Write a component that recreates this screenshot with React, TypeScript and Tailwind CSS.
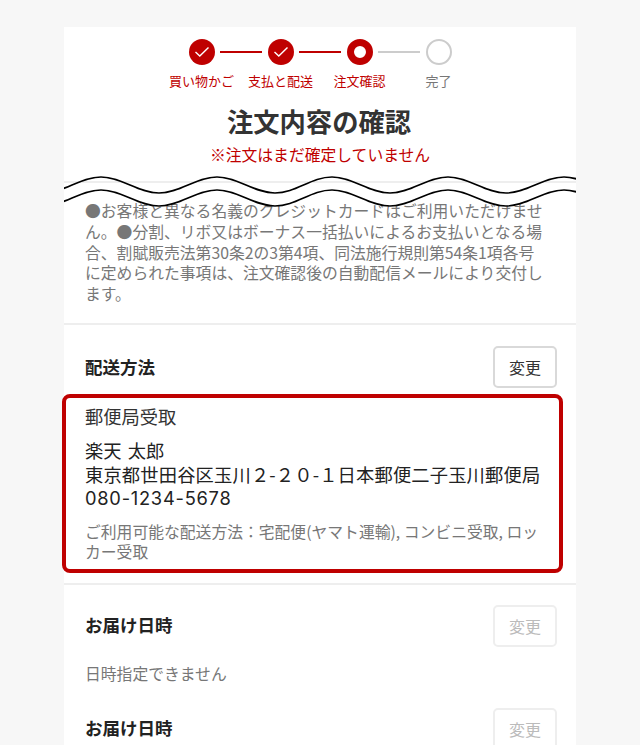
import React from 'react';

const FONT = '"Noto Sans CJK JP", "Noto Sans", sans-serif';

const steps = [
  { label: '買い物かご', state: 'done' },
  { label: '支払と配送', state: 'done' },
  { label: '注文確認', state: 'current' },
  { label: '完了', state: 'todo' },
];

const WAVE_TOP = 'M-21 193 C0 193 16 177 37 177 S74 193 95 193 S132 177 153 177 S190 193 211 193 S247 177 268 177 S305 193 326 193 S363 177 384 177 S421 193 442 193 S479 177 500 177 S537 193 558 193';

const StepCircle: React.FC<{ state: string }> = ({ state }) => {
  if (state === 'done') {
    return (
      <div className="w-[26px] h-[26px] rounded-full bg-[#bf0000] flex items-center justify-center shrink-0">
        <svg width="16" height="12" viewBox="0 0 16 12" fill="none">
          <path d="M1.5 6 L5.8 10 L14.5 1.5" stroke="#fff" strokeWidth="1.4" />
        </svg>
      </div>
    );
  }
  if (state === 'current') {
    return <div className="w-[26px] h-[26px] rounded-full border-[7px] border-[#bf0000] bg-white shrink-0" />;
  }
  return <div className="w-[26px] h-[26px] rounded-full border-[2px] border-[#ccc] bg-white shrink-0" />;
};

const SectionHeader: React.FC<{ title: string; disabled?: boolean }> = ({ title, disabled }) => (
  <div className="flex items-center justify-between pl-[21px] pr-[19px]">
    <h2 className="text-[17.5px] font-bold text-[#222]">{title}</h2>
    <button
      className={
        disabled
          ? 'w-[64px] h-[42px] rounded-[5px] border-2 border-[#eee] bg-white text-[16px] text-[#bbb]'
          : 'w-[64px] h-[42px] rounded-[5px] border-2 border-[#d9d9d9] bg-white text-[16px] text-[#333]'
      }
    >
      変更
    </button>
  </div>
);

export default function App() {
  return (
    <div className="h-[745px] overflow-hidden bg-[#f7f7f7] pt-[27px]" style={{ fontFamily: FONT }}>
      <div className="relative w-[512px] ml-[64px] bg-white">
        <div className="h-[156px] border-b-2 border-[#eee]">
          <div className="pt-[12px] flex items-center justify-center">
            {steps.map((s, i) => (
              <React.Fragment key={s.label}>
                <StepCircle state={s.state} />
                {i < 3 && (
                  <div className={i < 2 ? 'w-[42px] mx-[5.5px] h-[2px] bg-[#bf0000]' : 'w-[42px] mx-[5.5px] h-[2px] bg-[#ccc]'} />
                )}
              </React.Fragment>
            ))}
          </div>
          <div className="grid grid-cols-[79px_79px_79px_79px] justify-center mt-[6px]">
            {steps.map((s) => (
              <div
                key={s.label}
                className={s.state === 'todo' ? 'text-center text-[13px] leading-[19px] text-[#777]' : 'text-center text-[13px] leading-[19px] text-[#bf0000]'}
              >
                {s.label}
              </div>
            ))}
          </div>
          <h1 className="mt-[13px] pr-[2px] text-center text-[26.3px] leading-[36px] font-bold text-[#333]">注文内容の確認</h1>
          <p className="mt-[5px] text-center text-[15.8px] leading-[22px] text-[#bf0000]">※注文はまだ確定していません</p>
        </div>

        <div className="h-[142px] pt-[18px] pl-[21px] pr-[30px] border-b-2 border-[#eee] text-[15.8px] leading-[20.8px] text-[#777]">
          ●お客様と異なる名義のクレジットカードはご利用いただけません。●分割、リボ又はボーナス一括払いによるお支払いとなる場合、割賦販売法第30条2の3第4項、同法施行規則第54条1項各号に定められた事項は、注文確認後の自動配信メールにより交付します。
        </div>

        <div className="pt-[21px] pb-[10px]">
          <SectionHeader title="配送方法" />
          <div className="-mx-[2px] mt-[6px] border-[4px] border-[#bf0000] rounded-[8px] bg-white pl-[19px] pr-[15px] pt-[5px] pb-[6px] w-[501px]">
            <p className="text-[18.3px] leading-[26px] text-[#333]">郵便局受取</p>
            <div className="mt-[9px] text-[18.3px] leading-[24.2px] text-[#222]">
              <p className="[word-spacing:2px]">楽天 太郎</p>
              <p className="whitespace-nowrap tracking-[0.15px]">東京都世田谷区玉川２-２０-１日本郵便二子玉川郵便局</p>
              <p className="font-['Inter'] tracking-[0.75px]">080-1234-5678</p>
            </div>
            <p className="mt-[11px] text-[15.8px] leading-[20.5px] text-[#777]">
              ご利用可能な配送方法：宅配便(ヤマト運輸), コンビニ受取, ロッカー受取
            </p>
          </div>
        </div>

        <div className="border-t-2 border-[#eee] pt-[20px]">
          <SectionHeader title="お届け日時" disabled />
          <p className="mt-[16px] pl-[21px] text-[15.8px] leading-[22px] text-[#777]">日時指定できません</p>
          <div className="mt-[23px]">
            <SectionHeader title="お届け日時" disabled />
          </div>
        </div>

        {/* torn paper effect over the disclaimer */}
        <svg className="absolute left-0 top-[-27px]" width="512" height="230" viewBox="0 0 512 230" fill="none">
          <path d={WAVE_TOP + ' L558 171 L-21 171 Z'} fill="#fff" transform="translate(0,13)" />
          <path d={WAVE_TOP} stroke="#000" strokeWidth="1.6" />
          <path d={WAVE_TOP} stroke="#000" strokeWidth="1.6" transform="translate(0,13)" />
        </svg>
      </div>
    </div>
  );
}
